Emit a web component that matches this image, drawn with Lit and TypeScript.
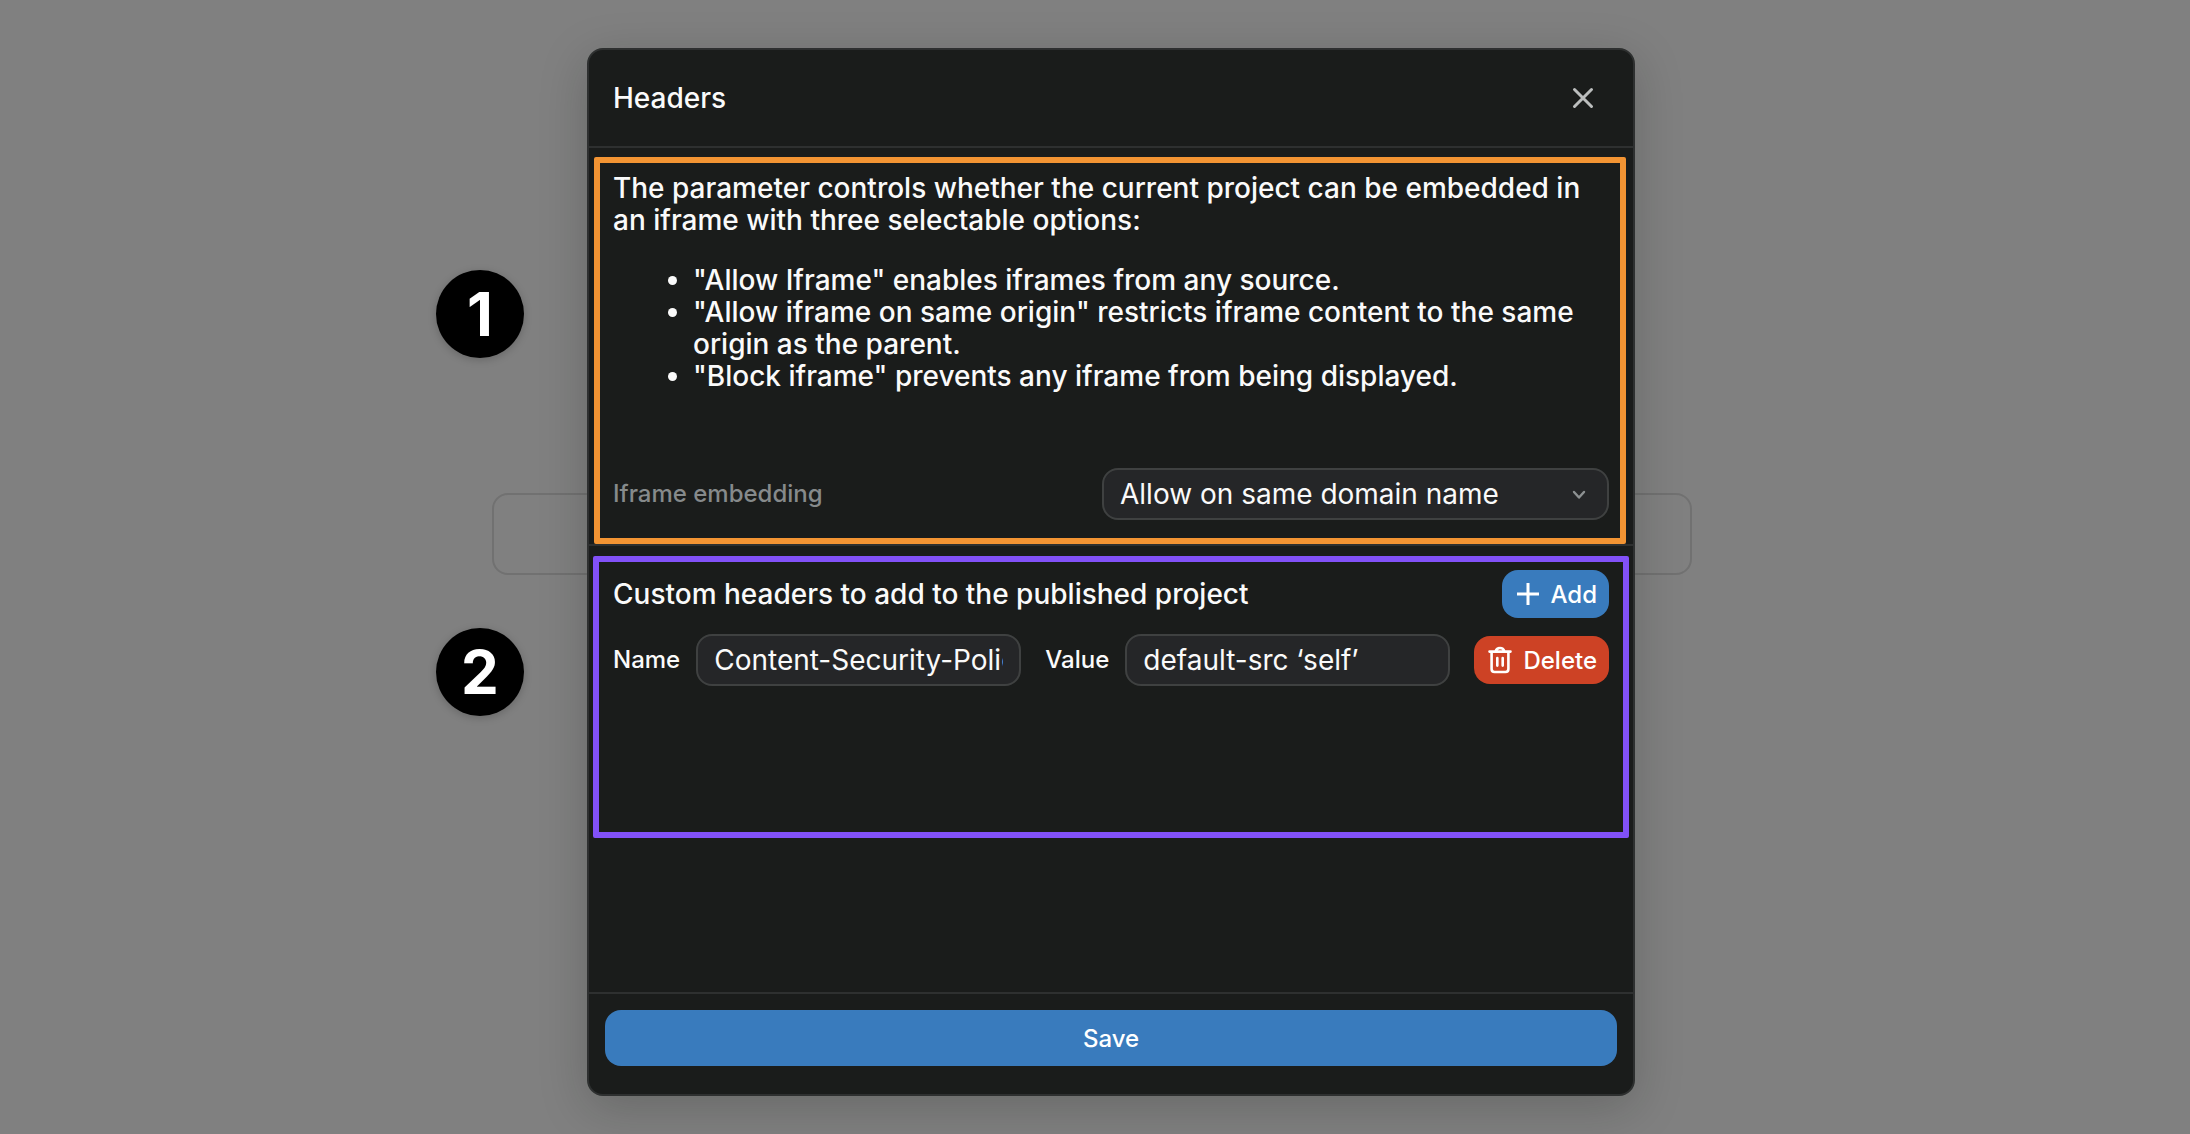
import { LitElement, html, css, svg } from "lit";
import { customElement, state } from "lit/decorators.js";

interface HeaderRow {
  name: string;
  value: string;
}

const closeIcon = svg`<svg class="icon" width="28" height="28" viewBox="0 0 28 28" fill="none" stroke="currentColor" stroke-width="3" stroke-linecap="round" aria-hidden="true"><path d="M5.5 5.5 22.5 22.5M22.5 5.5 5.5 22.5"/></svg>`;
const plusIcon = svg`<svg class="icon" width="28" height="28" viewBox="0 0 28 28" fill="none" stroke="currentColor" stroke-width="3" aria-hidden="true"><path d="M14 3V25M3 14H25"/></svg>`;
const trashIcon = svg`<svg class="icon" width="28" height="28" viewBox="0 0 28 28" fill="none" stroke="currentColor" stroke-width="2.6" stroke-linecap="round" stroke-linejoin="round" aria-hidden="true"><path d="M3.5 5.6H24.5M5.6 5.8V23Q5.6 26 8.6 26H19.4Q22.4 26 22.4 23V5.8M9.6 5.4Q10.6 2 14 2Q17.4 2 18.4 5.4M11.3 12V19.6M16.7 12V19.6"/></svg>`;
const chevronIcon = svg`<svg class="chevron" width="16" height="16" viewBox="0 0 16 16" fill="none" stroke="currentColor" stroke-width="2.4" stroke-linecap="round" stroke-linejoin="round" aria-hidden="true"><path d="M3 6 8 11.5 13 6"/></svg>`;

@customElement("app-root")
export class AppRoot extends LitElement {
  @state() private rows: HeaderRow[] = [
    { name: "Content-Security-Policy", value: "default-src ‘self’" },
  ];

  static styles = css`
    :host {
      display: block;
      font-family: Inter, "Liberation Sans", sans-serif;
      color: #fafafa;
    }
    *, *::before, *::after {
      box-sizing: border-box;
    }
    .page {
      position: relative;
      display: flex;
      justify-content: center;
      min-height: 100vh;
      padding: 48px 0 38px 32px;
      background: #808080;
      overflow: hidden;
    }
    .backdrop-field {
      position: absolute;
      top: 493px;
      left: calc(50% - 603px);
      width: 1200px;
      height: 82px;
      border: 2px solid #717171;
      border-radius: 16px;
    }
    .dialog {
      position: relative;
      display: flex;
      flex-direction: column;
      width: 100%;
      max-width: 1048px;
      border: 2px solid #2e3030;
      border-radius: 16px;
      background: #1a1c1b;
      box-shadow: 0 12px 48px rgba(16, 24, 20, 0.22);
    }
    .head {
      display: flex;
      align-items: center;
      justify-content: space-between;
      padding: 22px 24px;
      border-bottom: 2px solid #2e3030;
    }
    h2, h3, p, ul {
      margin: 0;
    }
    h2, h3, .info {
      font-size: 28px;
      line-height: 32px;
      font-weight: 500;
    }
    .section {
      position: relative;
      display: flex;
      flex-direction: column;
      padding: 24px;
    }
    .embedding {
      gap: 76px;
      border-bottom: 2px solid #2e3030;
    }
    .custom {
      flex: 1;
      gap: 16px;
    }
    .info {
      display: flex;
      flex-direction: column;
      gap: 28px;
    }
    .info ul {
      padding-left: 80px;
    }
    .row {
      display: flex;
      align-items: center;
      justify-content: space-between;
    }
    .header-row {
      display: flex;
      align-items: center;
      gap: 24px;
    }
    .field {
      display: flex;
      flex: 1 1 auto;
      align-items: center;
      gap: 16px;
      min-width: 0;
    }
    label {
      font-size: 24px;
      line-height: 32px;
      font-weight: 500;
    }
    .muted {
      color: #868a8b;
    }
    input, select {
      appearance: none;
      width: 100%;
      min-width: 0;
      height: 52px;
      margin: 0;
      padding: 0 16px;
      border: 2px solid #3f4141;
      border-radius: 16px;
      background: #252628;
      color: inherit;
      font-family: inherit;
      font-size: 28px;
      font-weight: 400;
    }
    .field input {
      flex: 1 1 0;
      width: 0;
    }
    .select {
      display: grid;
      align-items: center;
      width: 507px;
    }
    .select select, .select .chevron {
      grid-area: 1 / 1;
    }
    .chevron {
      justify-self: end;
      margin-right: 22px;
      color: #8d9192;
      pointer-events: none;
    }
    button {
      display: inline-flex;
      align-items: center;
      justify-content: center;
      gap: 9px;
      height: 48px;
      margin: 0;
      padding: 0 12px;
      border: 0;
      border-radius: 16px;
      color: #ffffff;
      font-family: inherit;
      font-size: 24px;
      font-weight: 500;
    }
    .icon {
      flex: none;
      display: block;
    }
    .close {
      width: 52px;
      height: 52px;
      padding: 0;
      background: none;
      color: #bcbebe;
    }
    .primary {
      background: #397bbd;
    }
    .danger {
      background: #cd4225;
    }
    .foot {
      display: flex;
      padding: 16px 16px 28px;
      border-top: 2px solid #2e3030;
    }
    .save {
      flex: 1;
      height: 56px;
    }
    .outline {
      position: absolute;
      border: 6px solid;
      border-radius: 2px;
      pointer-events: none;
    }
    .outline-embedding {
      inset: 9px 7px 0 5px;
      border-color: #f39433;
    }
    .outline-custom {
      top: 10px;
      left: 4px;
      right: 4px;
      height: 282px;
      border-color: #8251f8;
    }
    .badge {
      position: absolute;
      left: -153px;
      display: grid;
      place-items: center;
      width: 88px;
      height: 88px;
      border-radius: 50%;
      background: #000000;
      color: #ffffff;
      font-size: 60px;
      line-height: 88px;
      font-weight: 700;
      box-shadow: 0 2px 8px rgba(0, 0, 0, 0.2);
    }
    .badge-embedding {
      top: 122px;
    }
    .badge-custom {
      top: 82px;
    }
  `;

  private addRow() {
    this.rows = [...this.rows, { name: "", value: "" }];
  }

  private deleteRow(index: number) {
    this.rows = this.rows.filter((_, i) => i !== index);
  }

  private renderRow(row: HeaderRow, i: number) {
    return html`
      <div class="header-row">
        <div class="field">
          <label for="name-${i}">Name</label>
          <input id="name-${i}" type="text" .value=${row.name} />
        </div>
        <div class="field">
          <label for="value-${i}">Value</label>
          <input id="value-${i}" type="text" .value=${row.value} />
        </div>
        <button class="danger" type="button" @click=${() => this.deleteRow(i)}>
          ${trashIcon}<span>Delete</span>
        </button>
      </div>
    `;
  }

  render() {
    return html`
      <main class="page">
        <div class="backdrop-field"></div>
        <div class="dialog" role="dialog" aria-labelledby="title">
          <header class="head">
            <h2 id="title">Headers</h2>
            <button class="close" type="button" aria-label="Close">${closeIcon}</button>
          </header>
          <section class="section embedding">
            <div class="info">
              <p>The parameter controls whether the current project can be embedded in an iframe with three selectable options:</p>
              <ul>
                <li>"Allow Iframe" enables iframes from any source.</li>
                <li>"Allow iframe on same origin" restricts iframe content to the same origin as the parent.</li>
                <li>"Block iframe" prevents any iframe from being displayed.</li>
              </ul>
            </div>
            <div class="row">
              <label class="muted" for="embedding">Iframe embedding</label>
              <div class="select">
                <select id="embedding">
                  <option>Allow on same domain name</option>
                </select>
                ${chevronIcon}
              </div>
            </div>
            <div class="outline outline-embedding"></div>
            <div class="badge badge-embedding">1</div>
          </section>
          <section class="section custom">
            <div class="row">
              <h3>Custom headers to add to the published project</h3>
              <button class="primary" type="button" @click=${this.addRow}>${plusIcon}<span>Add</span></button>
            </div>
            ${this.rows.map((row, i) => this.renderRow(row, i))}
            <div class="outline outline-custom"></div>
            <div class="badge badge-custom">2</div>
          </section>
          <footer class="foot">
            <button class="primary save" type="button">Save</button>
          </footer>
        </div>
      </main>
    `;
  }
}
